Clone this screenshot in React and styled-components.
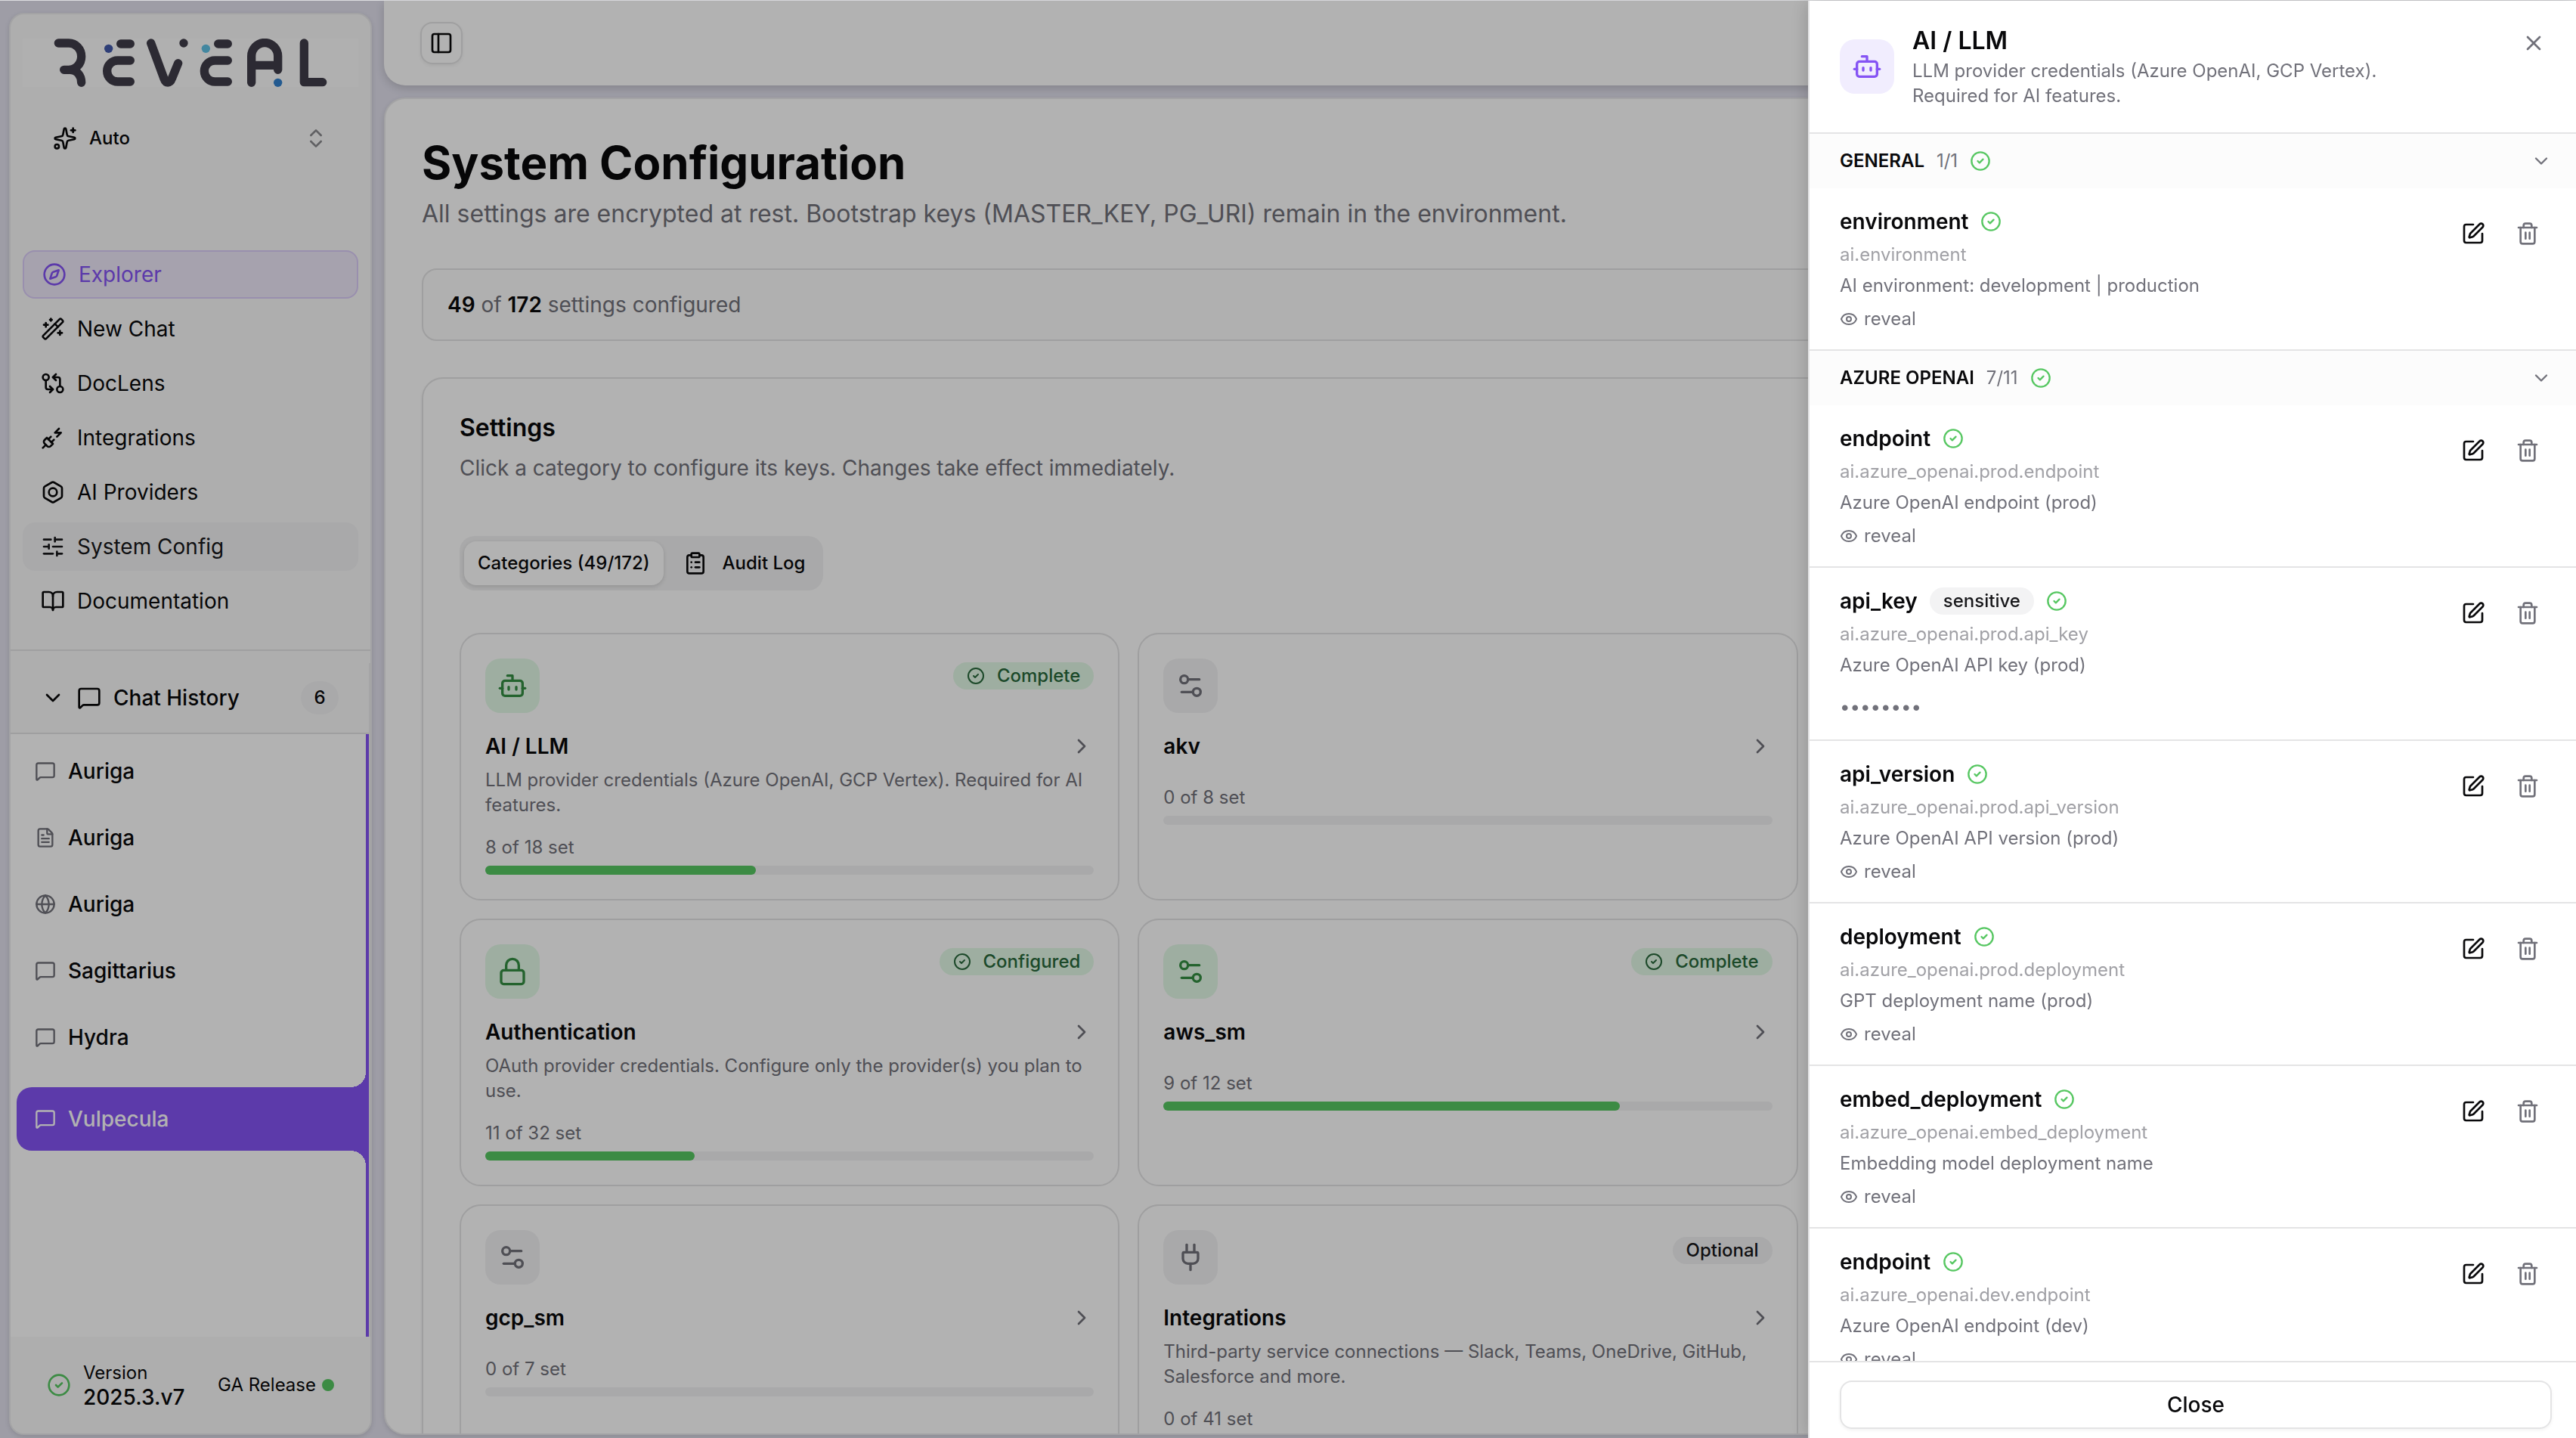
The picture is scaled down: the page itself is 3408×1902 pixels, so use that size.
import React from "react";
import styled, { createGlobalStyle, css } from "styled-components";
import {
  Bolt,
  BookOpen,
  Bot,
  ChevronDown,
  ChevronRight,
  ChevronsUpDown,
  CircleCheck,
  ClipboardList,
  Compass,
  Eye,
  FileText,
  GitCompareArrows,
  Globe,
  Lock,
  MessageSquare,
  PanelLeft,
  Plug,
  PlugZap,
  Settings2,
  SlidersHorizontal,
  Sparkles,
  SquarePen,
  Trash2,
  WandSparkles,
  X
} from "lucide-react";

const colors = {
  backdrop: "#e2e1ee",
  surface: "#fafafa",
  muted: "#f3f3f4",
  border: "#e4e4e5",
  text: "#09090b",
  subtle: "#71717a",
  primary: "#8553f4",
  primarySoft: "#f1edfe",
  green: "#57c762",
  greenDark: "#348e43",
  greenText: "#29693c",
  greenSoft: "#e3fae7"
};

const GlobalStyle = createGlobalStyle`
  *, *::before, *::after {
    box-sizing: border-box;
  }
  body {
    margin: 0;
    overflow: hidden;
    background: ${colors.backdrop};
    color: ${colors.text};
    font-family: Inter, "Liberation Sans", sans-serif;
    font-size: 28px;
    line-height: 40px;
    -webkit-font-smoothing: antialiased;
  }
  h1, h2, h3, h4, p, ul {
    margin: 0;
    padding: 0;
  }
  ul {
    list-style: none;
  }
  a {
    color: inherit;
    text-decoration: none;
  }
  button {
    margin: 0;
    padding: 0;
    border: 0;
    background: none;
    color: inherit;
    font: inherit;
    text-align: left;
    cursor: pointer;
  }
  svg {
    display: block;
    flex-shrink: 0;
  }
`;

const Shell = styled.div`
  display: flex;
  gap: 16px;
  height: 100vh;
  padding-left: 12px;
  border-top: 1px solid #dcdde0;
`;

/* ---------- sidebar ---------- */

const Sidebar = styled.aside`
  display: flex;
  flex-direction: column;
  flex-shrink: 0;
  width: 480px;
  margin: 16px 0 4px;
  border: 2px solid #eaeaec;
  border-radius: 20px;
  background: ${colors.surface};
  box-shadow: 0 2px 6px rgba(0, 0, 0, 0.12);
  overflow: hidden;
`;

const LogoBox = styled.div`
  margin: 32px 16px 0;
  background: #fdfdfd;

  svg {
    width: 100%;
    height: 64px;
  }
`;

const ModeButton = styled.button`
  display: flex;
  align-items: center;
  gap: 16px;
  height: 96px;
  margin: 20px 16px 0;
  padding: 0 40px;
  font-size: 24px;
  font-weight: 500;

  svg:last-child {
    margin-left: auto;
    color: #8a8a8e;
  }
`;

const Nav = styled.nav`
  display: flex;
  flex-direction: column;
  gap: 8px;
  margin-top: 100px;
  padding: 0 16px 32px;
  border-bottom: 2px solid ${colors.border};
`;

const NavLink = styled.a`
  display: flex;
  align-items: center;
  gap: 16px;
  height: 64px;
  padding: 0 24px;
  border-radius: 16px;

  ${props =>
    props.$hovered &&
    css`
      background: ${colors.muted};
      color: #18181b;
    `}

  ${props =>
    props.$active &&
    css`
      border: 2px solid #dccdfa;
      background: #eee8f9;
      color: ${colors.primary};
    `}
`;

const History = styled.section`
  display: flex;
  flex: 1;
  flex-direction: column;
  min-height: 0;
  margin-top: 16px;
  border-right: 2px solid #ececee;
`;

const HistoryToggle = styled.button`
  display: flex;
  align-items: center;
  gap: 16px;
  height: 94px;
  padding: 0 40px;
  border-bottom: 2px solid ${colors.border};
  font-weight: 500;
`;

const Count = styled.span`
  width: 50px;
  margin-left: auto;
  border-radius: 22px;
  background: ${colors.muted};
  font-size: 24px;
  line-height: 44px;
  text-align: center;
`;

const ChatList = styled.ul`
  display: flex;
  flex: 1;
  flex-direction: column;
  gap: 4px;
  padding: 7px 0 0 8px;
  border-right: 4px solid ${colors.primary};
  background: #fff;
`;

const Chat = styled.li`
  position: relative;

  a {
    display: flex;
    align-items: center;
    gap: 16px;
    height: 84px;
    padding-left: 24px;
    font-weight: 500;
  }
  svg {
    color: ${colors.subtle};
  }

  ${props =>
    props.$active &&
    css`
      margin-top: 20px;
      border-radius: 20px 0 0 20px;
      background: ${colors.primary};
      color: #fff;

      svg {
        color: #fff;
      }

      /* concave corners that join the row to the rail */
      &::before,
      &::after {
        content: "";
        position: absolute;
        right: 0;
        width: 20px;
        height: 20px;
      }
      &::before {
        bottom: 100%;
        background: radial-gradient(
          circle at 0 0,
          transparent 20px,
          ${colors.primary} 20px
        );
      }
      &::after {
        top: 100%;
        background: radial-gradient(
          circle at 0 100%,
          transparent 20px,
          ${colors.primary} 20px
        );
      }
    `}
`;

const SidebarFooter = styled.footer`
  display: flex;
  align-items: center;
  gap: 16px;
  height: 128px;
  padding: 0 48px;
  font-size: 24px;
  line-height: 32px;

  > svg {
    color: ${colors.green};
  }
`;

const Version = styled.strong`
  display: block;
  font-size: 28px;
  font-weight: 500;
`;

const Release = styled.span`
  display: flex;
  align-items: center;
  gap: 8px;
  margin-left: auto;
  white-space: nowrap;

  &::after {
    content: "";
    width: 16px;
    height: 16px;
    border-radius: 50%;
    background: ${colors.green};
  }
`;

/* ---------- main column ---------- */

const Content = styled.div`
  display: flex;
  flex: 1;
  flex-direction: column;
  gap: 16px;
  min-width: 0;
`;

const TopBar = styled.header`
  display: flex;
  align-items: center;
  flex-shrink: 0;
  height: 112px;
  padding: 0 48px;
  border-radius: 0 0 28px 28px;
  background: #fff;
  box-shadow: 0 4px 12px rgba(0, 0, 0, 0.16);
`;

const PanelButton = styled.button`
  display: grid;
  place-items: center;
  width: 56px;
  height: 56px;
  border: 2px solid ${colors.border};
  border-radius: 16px;
  box-shadow: 0 2px 4px rgba(0, 0, 0, 0.06);
`;

const Main = styled.main`
  flex: 1;
  min-height: 0;
  margin: 0 32px 4px 0;
  padding: 48px;
  border: 2px solid #eaeaec;
  border-radius: 28px;
  background: #fff;
  box-shadow: 0 2px 6px rgba(0, 0, 0, 0.12);
  overflow: hidden;
`;

const PageTitle = styled.h1`
  font-size: 60px;
  font-weight: 700;
  line-height: 72px;
`;

const PageLead = styled.p`
  margin-top: 8px;
  color: ${colors.subtle};
  font-size: 32px;
  line-height: 48px;
`;

const Summary = styled.div`
  margin-top: 48px;
  padding: 26px 32px;
  border: 2px solid ${colors.border};
  border-radius: 20px;
  background: #fcfcfc;
  color: ${colors.subtle};

  strong {
    color: ${colors.text};
    font-weight: 600;
  }
`;

const Panel = styled.section`
  margin-top: 48px;
  padding: 48px;
  border: 2px solid ${colors.border};
  border-radius: 28px;
  box-shadow: 0 2px 4px rgba(0, 0, 0, 0.06);
`;

const PanelTitle = styled.h2`
  font-size: 32px;
  font-weight: 600;
  line-height: 34px;
`;

const PanelText = styled.p`
  margin-top: 16px;
  color: ${colors.subtle};
`;

const Tabs = styled.div`
  display: inline-flex;
  align-items: center;
  gap: 8px;
  height: 72px;
  margin: 70px 0 56px;
  padding: 0 6px;
  border-radius: 20px;
  background: ${colors.muted};
`;

const Tab = styled.button`
  display: flex;
  align-items: center;
  gap: 20px;
  height: 58px;
  padding: 0 18px;
  border-radius: 16px;
  font-size: 24px;
  font-weight: 500;

  ${props =>
    props.$active &&
    css`
      background: #fff;
      box-shadow: 0 2px 6px rgba(0, 0, 0, 0.14);
    `}
`;

const CardGrid = styled.div`
  display: grid;
  grid-template-columns: repeat(3, 1fr);
  gap: 24px;
`;

const Card = styled.button`
  display: flex;
  flex-direction: column;
  min-width: 0;
  padding: 32px;
  border: 2px solid ${colors.border};
  border-radius: 28px;
  color: ${colors.subtle};
  font-size: 24px;
  line-height: 32px;
`;

const CardTop = styled.div`
  display: flex;
  align-items: flex-start;
  justify-content: space-between;
  width: 100%;
  font-size: 32px;
  line-height: 48px;
`;

const Tile = styled.span`
  display: grid;
  flex-shrink: 0;
  place-items: center;
  width: 72px;
  height: 72px;
  border-radius: 20px;
  background: ${colors.muted};
  color: ${colors.subtle};

  ${props =>
    props.$tone === "green" &&
    css`
      background: ${colors.greenSoft};
      color: ${colors.greenDark};
    `}

  ${props =>
    props.$tone === "primary" &&
    css`
      background: ${colors.primarySoft};
      color: ${colors.primary};
    `}
`;

const Badge = styled.span`
  display: inline-flex;
  align-items: center;
  gap: 16px;
  padding: 2px 18px;
  border-radius: 18px;
  background: ${props => (props.$green ? colors.greenSoft : colors.muted)};
  color: ${props => (props.$green ? colors.greenText : "#18181b")};
  font-size: 24px;
  font-weight: 500;
  line-height: 32px;
`;

const CardTitle = styled.h3`
  display: flex;
  align-items: center;
  justify-content: space-between;
  width: 100%;
  margin-top: 24px;
  color: ${colors.text};
  font-size: 28px;
  font-weight: 600;
  line-height: 40px;

  svg {
    color: ${colors.subtle};
  }
`;

const CardText = styled.p`
  margin: 8px 0 24px;
  line-height: 33px;
`;

const Track = styled.div`
  width: 100%;
  height: 12px;
  margin-top: 8px;
  border-radius: 6px;
  background: ${colors.muted};
`;

const Fill = styled.div`
  height: 100%;
  border-radius: 6px;
  background: ${colors.green};
`;

/* ---------- drawer ---------- */

const Overlay = styled.div`
  position: fixed;
  inset: 1px 0 0;
  background: rgba(0, 0, 0, 0.3);
`;

const Drawer = styled.aside`
  position: fixed;
  top: 1px;
  right: 0;
  bottom: 0;
  display: flex;
  flex-direction: column;
  width: 1016px;
  max-width: 100%;
  border-left: 2px solid ${colors.border};
  background: #fff;
  box-shadow: 0 0 24px rgba(0, 0, 0, 0.2);
`;

const DrawerHeader = styled.header`
  display: flex;
  align-items: center;
  gap: 24px;
  padding: 32px 40px;
  border-bottom: 2px solid ${colors.border};
`;

const DrawerIntro = styled.div`
  max-width: 640px;

  h2 {
    font-size: 32px;
    font-weight: 600;
    line-height: 42px;
  }
  p {
    margin-top: 2px;
    color: ${colors.subtle};
    font-size: 24px;
    line-height: 33px;
  }
`;

const DrawerClose = styled.button`
  align-self: flex-start;
  margin: 8px 0 0 auto;
  color: ${colors.subtle};
`;

const DrawerBody = styled.div`
  flex: 1;
  min-height: 0;
  overflow: hidden;
`;

const GroupHeader = styled.button`
  display: flex;
  align-items: center;
  gap: 16px;
  width: 100%;
  height: 72px;
  padding: 0 32px 0 40px;
  background: #fcfcfc;
  font-size: 24px;

  strong {
    font-weight: 600;
  }
  span,
  svg:last-child {
    color: ${colors.subtle};
  }
  svg {
    color: ${colors.green};
  }
  svg:last-child {
    margin-left: auto;
  }
`;

const Entry = styled.article`
  display: flex;
  justify-content: space-between;
  padding: 24px 32px 24px 40px;
  border-bottom: 2px solid ${colors.border};
  color: ${colors.subtle};
  font-size: 24px;
  line-height: 32px;
`;

const EntryTitle = styled.div`
  display: flex;
  align-items: center;
  gap: 16px;
  height: 40px;

  h4 {
    color: ${colors.text};
    font-size: 28px;
    font-weight: 600;
    line-height: 40px;
  }
  > svg {
    color: ${colors.green};
  }
`;

const EntryKey = styled.p`
  margin-top: 8px;
  color: #a1a1a6;
`;

const EntryText = styled.p`
  margin-top: 8px;
  line-height: 33px;
`;

const Reveal = styled.button`
  display: flex;
  align-items: center;
  gap: 8px;
  margin-top: 12px;
`;

const Secret = styled.p`
  margin-top: 20px;
  line-height: 38px;
`;

const EntryActions = styled.div`
  display: flex;
  align-items: flex-start;
  gap: 8px;
  padding-top: 4px;
`;

const IconButton = styled.button`
  display: grid;
  place-items: center;
  width: 64px;
  height: 64px;
  color: ${props => (props.$quiet ? colors.subtle : colors.text)};
`;

const DrawerFooter = styled.footer`
  display: flex;
  padding: 24px 32px 12px 40px;
  border-top: 2px solid ${colors.border};
`;

const CloseButton = styled.button`
  flex: 1;
  height: 64px;
  border: 2px solid ${colors.border};
  border-radius: 16px;
  box-shadow: 0 2px 4px rgba(0, 0, 0, 0.05);
  font-weight: 500;
  text-align: center;
`;

const navItems = [
  { label: "Explorer", icon: Compass, active: true },
  { label: "New Chat", icon: WandSparkles },
  { label: "DocLens", icon: GitCompareArrows },
  { label: "Integrations", icon: PlugZap },
  { label: "AI Providers", icon: Bolt },
  { label: "System Config", icon: SlidersHorizontal, hovered: true },
  { label: "Documentation", icon: BookOpen }
];

const chats = [
  { name: "Auriga", icon: MessageSquare },
  { name: "Auriga", icon: FileText },
  { name: "Auriga", icon: Globe },
  { name: "Sagittarius", icon: MessageSquare },
  { name: "Hydra", icon: MessageSquare },
  { name: "Vulpecula", icon: MessageSquare, active: true }
];

const categories = [
  {
    name: "AI / LLM",
    icon: Bot,
    text:
      "LLM provider credentials (Azure OpenAI, GCP Vertex). Required for AI features.",
    set: 8,
    total: 18,
    badge: "Complete"
  },
  { name: "akv", icon: Settings2, set: 0, total: 8 },
  null,
  {
    name: "Authentication",
    icon: Lock,
    text:
      "OAuth provider credentials. Configure only the provider(s) you plan to use.",
    set: 11,
    total: 32,
    badge: "Configured"
  },
  {
    name: "aws_sm",
    icon: Settings2,
    set: 9,
    total: 12,
    badge: "Complete"
  },
  null,
  { name: "gcp_sm", icon: Settings2, set: 0, total: 7 },
  {
    name: "Integrations",
    icon: Plug,
    text:
      "Third-party service connections — Slack, Teams, OneDrive, GitHub, Salesforce and more.",
    set: 0,
    total: 41,
    badge: "Optional"
  }
];

const groups = [
  {
    name: "GENERAL",
    count: "1/1",
    entries: [
      {
        name: "environment",
        path: "ai.environment",
        text: "AI environment: development | production"
      }
    ]
  },
  {
    name: "AZURE OPENAI",
    count: "7/11",
    entries: [
      {
        name: "endpoint",
        path: "ai.azure_openai.prod.endpoint",
        text: "Azure OpenAI endpoint (prod)"
      },
      {
        name: "api_key",
        path: "ai.azure_openai.prod.api_key",
        text: "Azure OpenAI API key (prod)",
        sensitive: true
      },
      {
        name: "api_version",
        path: "ai.azure_openai.prod.api_version",
        text: "Azure OpenAI API version (prod)"
      },
      {
        name: "deployment",
        path: "ai.azure_openai.prod.deployment",
        text: "GPT deployment name (prod)"
      },
      {
        name: "embed_deployment",
        path: "ai.azure_openai.embed_deployment",
        text: "Embedding model deployment name"
      },
      {
        name: "endpoint",
        path: "ai.azure_openai.dev.endpoint",
        text: "Azure OpenAI endpoint (dev)"
      }
    ]
  }
];

const Logo = () => (
  <svg viewBox="-90 63 1332 192" role="img" aria-label="Reveal">
    <g
      fill="none"
      stroke="#403d49"
      strokeWidth="34"
      strokeLinecap="round"
      strokeLinejoin="round"
    >
      <path d="M52 81H93A50 53 0 0 1 93 187H74" />
      <path d="M97 187C126 187 143 210 143 238" />
      <path d="M299 84H337M337 150H287A42 42 0 0 0 287 234H337" />
      <path d="M419 81L471 222C478 242 495 242 502 222L527 161" />
      <path d="M686 84H724M724 150H673A42 42 0 0 0 673 234H724" />
      <path d="M818 238V133A52 53 0 0 1 923 133V187M818 169H923" />
      <path d="M1027 81V236H1100" />
    </g>
    <circle cx="549" cy="81" r="17" fill="#403d49" />
    <circle cx="251" cy="103" r="17" fill="#435aab" />
    <circle cx="637" cy="103" r="17" fill="#61c2e6" />
    <circle cx="923" cy="238" r="17" fill="#3382ce" />
  </svg>
);

const CategoryCard = ({ name, icon: Icon, text, set, total, badge }) => {
  const green = set > 0;
  return (
    <Card type="button">
      <CardTop>
        <Tile $tone={green ? "green" : undefined}>
          <Icon size={40} />
        </Tile>
        {badge && (
          <div>
            <Badge $green={green}>
              {green && <CircleCheck size={24} />}
              {badge}
            </Badge>
          </div>
        )}
      </CardTop>
      <CardTitle>
        {name}
        <ChevronRight size={32} />
      </CardTitle>
      <CardText>{text}</CardText>
      <span>
        {set} of {total} set
      </span>
      <Track>
        {green && <Fill style={{ width: `${(set / total) * 100}%` }} />}
      </Track>
    </Card>
  );
};

const SettingEntry = ({ name, path, text, sensitive }) => (
  <Entry>
    <div>
      <EntryTitle>
        <h4>{name}</h4>
        {sensitive && <Badge>sensitive</Badge>}
        <CircleCheck size={28} />
      </EntryTitle>
      <EntryKey>{path}</EntryKey>
      <EntryText>{text}</EntryText>
      {sensitive ? (
        <Secret>••••••••</Secret>
      ) : (
        <Reveal type="button">
          <Eye size={24} />
          reveal
        </Reveal>
      )}
    </div>
    <EntryActions>
      <IconButton type="button" aria-label={`Edit ${name}`}>
        <SquarePen size={32} />
      </IconButton>
      <IconButton type="button" $quiet aria-label={`Delete ${name}`}>
        <Trash2 size={32} />
      </IconButton>
    </EntryActions>
  </Entry>
);

const App = () => {
  return (
    <>
      <GlobalStyle />
      <Shell>
        <Sidebar>
          <LogoBox>
            <Logo />
          </LogoBox>
          <ModeButton type="button">
            <Sparkles size={32} />
            Auto
            <ChevronsUpDown size={32} />
          </ModeButton>
          <Nav>
            {navItems.map(({ label, icon: Icon, active, hovered }) => (
              <NavLink href="#" key={label} $active={active} $hovered={hovered}>
                <Icon size={32} />
                {label}
              </NavLink>
            ))}
          </Nav>
          <History>
            <HistoryToggle type="button">
              <ChevronDown size={32} />
              <MessageSquare size={32} />
              Chat History
              <Count>6</Count>
            </HistoryToggle>
            <ChatList>
              {chats.map(({ name, icon: Icon, active }, index) => (
                <Chat key={index} $active={active}>
                  <a href="#">
                    <Icon size={28} />
                    {name}
                  </a>
                </Chat>
              ))}
            </ChatList>
          </History>
          <SidebarFooter>
            <CircleCheck size={32} />
            <div>
              Version
              <Version>2025.3.v7</Version>
            </div>
            <Release>GA Release</Release>
          </SidebarFooter>
        </Sidebar>
        <Content>
          <TopBar>
            <PanelButton type="button" aria-label="Toggle sidebar">
              <PanelLeft size={32} />
            </PanelButton>
          </TopBar>
          <Main>
            <PageTitle>System Configuration</PageTitle>
            <PageLead>
              All settings are encrypted at rest. Bootstrap keys (MASTER_KEY,
              PG_URI) remain in the environment.
            </PageLead>
            <Summary>
              <strong>49</strong> of <strong>172</strong> settings configured
            </Summary>
            <Panel>
              <PanelTitle>Settings</PanelTitle>
              <PanelText>
                Click a category to configure its keys. Changes take effect
                immediately.
              </PanelText>
              <Tabs role="tablist">
                <Tab type="button" role="tab" aria-selected="true" $active>
                  Categories (49/172)
                </Tab>
                <Tab type="button" role="tab" aria-selected="false">
                  <ClipboardList size={32} />
                  Audit Log
                </Tab>
              </Tabs>
              <CardGrid>
                {categories.map((category, index) =>
                  category ? (
                    <CategoryCard key={index} {...category} />
                  ) : (
                    <div key={index} />
                  )
                )}
              </CardGrid>
            </Panel>
          </Main>
        </Content>
      </Shell>
      <Overlay />
      <Drawer role="dialog" aria-label="AI / LLM">
        <DrawerHeader>
          <Tile $tone="primary">
            <Bot size={40} />
          </Tile>
          <DrawerIntro>
            <h2>AI / LLM</h2>
            <p>
              LLM provider credentials (Azure OpenAI, GCP Vertex). Required for
              AI features.
            </p>
          </DrawerIntro>
          <DrawerClose type="button" aria-label="Close panel">
            <X size={32} />
          </DrawerClose>
        </DrawerHeader>
        <DrawerBody>
          {groups.map(group => (
            <section key={group.name}>
              <GroupHeader type="button" aria-expanded="true">
                <strong>{group.name}</strong>
                <span>{group.count}</span>
                <CircleCheck size={28} />
                <ChevronDown size={28} />
              </GroupHeader>
              {group.entries.map(entry => (
                <SettingEntry key={entry.path} {...entry} />
              ))}
            </section>
          ))}
        </DrawerBody>
        <DrawerFooter>
          <CloseButton type="button">Close</CloseButton>
        </DrawerFooter>
      </Drawer>
    </>
  );
};

export default App;
